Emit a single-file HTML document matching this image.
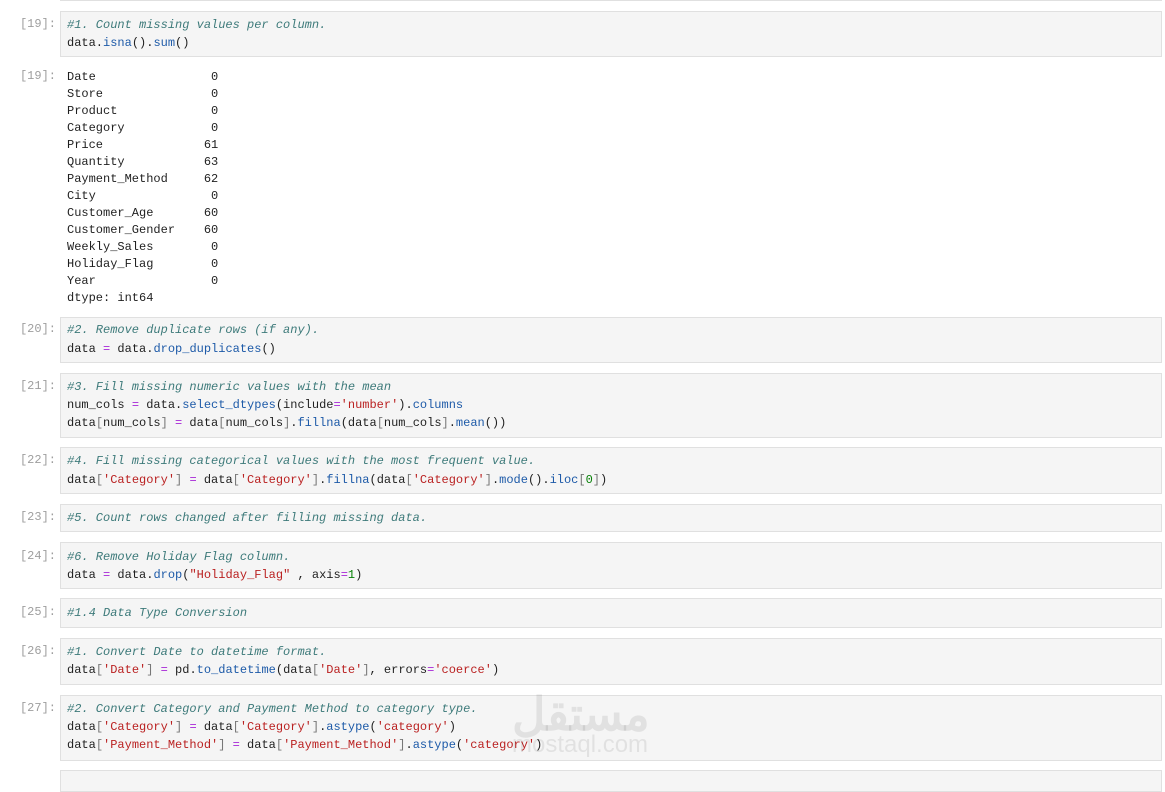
<!DOCTYPE html>
<html><head><meta charset="utf-8"><style>
body{margin:0;width:1165px;height:773px;background:#fff;position:relative;overflow:hidden;font-family:"Liberation Mono",monospace;font-size:12px;color:#1f1f1f}
.c{position:absolute;left:60px;width:1100px;background:#f5f5f5;border:1px solid #e0e0e0}
.p{position:absolute;left:0;width:56px;text-align:right;color:#9e9e9e;font-size:12px}
.l{position:absolute;left:67px;white-space:pre;line-height:17px;margin-top:1px}
.cm{color:#3d7a7a;font-style:italic}
.f{color:#1d5aa8}
.s{color:#ba2121}
.o{color:#a626d6}
.b{color:#777}
.n{color:#088008}
.wm{position:absolute;color:rgba(0,0,0,0.08);font-family:"Liberation Sans",sans-serif;font-weight:bold}
</style></head><body>
<div style="position:absolute;left:60px;top:0;width:1102px;height:1px;background:#e0e0e0"></div>

<div class="c" style="top:11px;height:44px"></div>
<div class="p" style="top:17px">[19]:</div>
<div class="l" style="top:16px"><span class="cm">#1. Count missing values per column.</span></div>
<div class="l" style="top:34px">data.<span class="f">isna</span>().<span class="f">sum</span>()</div>

<div class="p" style="top:69px">[19]:</div>
<div class="l" style="top:68px">Date                0
Store               0
Product             0
Category            0
Price              61
Quantity           63
Payment_Method     62
City                0
Customer_Age       60
Customer_Gender    60
Weekly_Sales        0
Holiday_Flag        0
Year                0
dtype: int64</div>

<div class="c" style="top:317px;height:44px"></div>
<div class="p" style="top:322px">[20]:</div>
<div class="l" style="top:321px"><span class="cm">#2. Remove duplicate rows (if any).</span></div>
<div class="l" style="top:340px">data <span class="o">=</span> data.<span class="f">drop_duplicates</span>()</div>

<div class="c" style="top:373px;height:63px"></div>
<div class="p" style="top:379px">[21]:</div>
<div class="l" style="top:378px"><span class="cm">#3. Fill missing numeric values with the mean</span></div>
<div class="l" style="top:396px">num_cols <span class="o">=</span> data.<span class="f">select_dtypes</span>(include<span class="o">=</span><span class="s">'number'</span>).<span class="f">columns</span></div>
<div class="l" style="top:414px">data<span class="b">[</span>num_cols<span class="b">]</span> <span class="o">=</span> data<span class="b">[</span>num_cols<span class="b">]</span>.<span class="f">fillna</span>(data<span class="b">[</span>num_cols<span class="b">]</span>.<span class="f">mean</span>())</div>

<div class="c" style="top:447px;height:45px"></div>
<div class="p" style="top:453px">[22]:</div>
<div class="l" style="top:452px"><span class="cm">#4. Fill missing categorical values with the most frequent value.</span></div>
<div class="l" style="top:471px">data<span class="b">[</span><span class="s">'Category'</span><span class="b">]</span> <span class="o">=</span> data<span class="b">[</span><span class="s">'Category'</span><span class="b">]</span>.<span class="f">fillna</span>(data<span class="b">[</span><span class="s">'Category'</span><span class="b">]</span>.<span class="f">mode</span>().<span class="f">iloc</span><span class="b">[</span><span class="n">0</span><span class="b">]</span>)</div>

<div class="c" style="top:504px;height:26px"></div>
<div class="p" style="top:510px">[23]:</div>
<div class="l" style="top:509px"><span class="cm">#5. Count rows changed after filling missing data.</span></div>

<div class="c" style="top:542px;height:45px"></div>
<div class="p" style="top:549px">[24]:</div>
<div class="l" style="top:548px"><span class="cm">#6. Remove Holiday Flag column.</span></div>
<div class="l" style="top:566px">data <span class="o">=</span> data.<span class="f">drop</span>(<span class="s">"Holiday_Flag"</span> , axis<span class="o">=</span><span class="n">1</span>)</div>

<div class="c" style="top:598px;height:28px"></div>
<div class="p" style="top:605px">[25]:</div>
<div class="l" style="top:604px"><span class="cm">#1.4 Data Type Conversion</span></div>

<div class="c" style="top:638px;height:45px"></div>
<div class="p" style="top:644px">[26]:</div>
<div class="l" style="top:643px"><span class="cm">#1. Convert Date to datetime format.</span></div>
<div class="l" style="top:661px">data<span class="b">[</span><span class="s">'Date'</span><span class="b">]</span> <span class="o">=</span> pd.<span class="f">to_datetime</span>(data<span class="b">[</span><span class="s">'Date'</span><span class="b">]</span>, errors<span class="o">=</span><span class="s">'coerce'</span>)</div>

<div class="c" style="top:695px;height:64px"></div>
<div class="p" style="top:701px">[27]:</div>
<div class="l" style="top:700px"><span class="cm">#2. Convert Category and Payment Method to category type.</span></div>
<div class="l" style="top:718px">data<span class="b">[</span><span class="s">'Category'</span><span class="b">]</span> <span class="o">=</span> data<span class="b">[</span><span class="s">'Category'</span><span class="b">]</span>.<span class="f">astype</span>(<span class="s">'category'</span>)</div>
<div class="l" style="top:736px">data<span class="b">[</span><span class="s">'Payment_Method'</span><span class="b">]</span> <span class="o">=</span> data<span class="b">[</span><span class="s">'Payment_Method'</span><span class="b">]</span>.<span class="f">astype</span>(<span class="s">'category'</span>)</div>

<div class="c" style="top:770px;height:20px"></div>

<div class="wm" style="top:678px;left:512px;font-size:46px;font-family:'Noto Sans CJK SC',sans-serif">مستقل</div>
<div class="wm" style="top:731px;left:512px;font-size:24px;font-weight:normal">mostaql.com</div>
</body></html>
